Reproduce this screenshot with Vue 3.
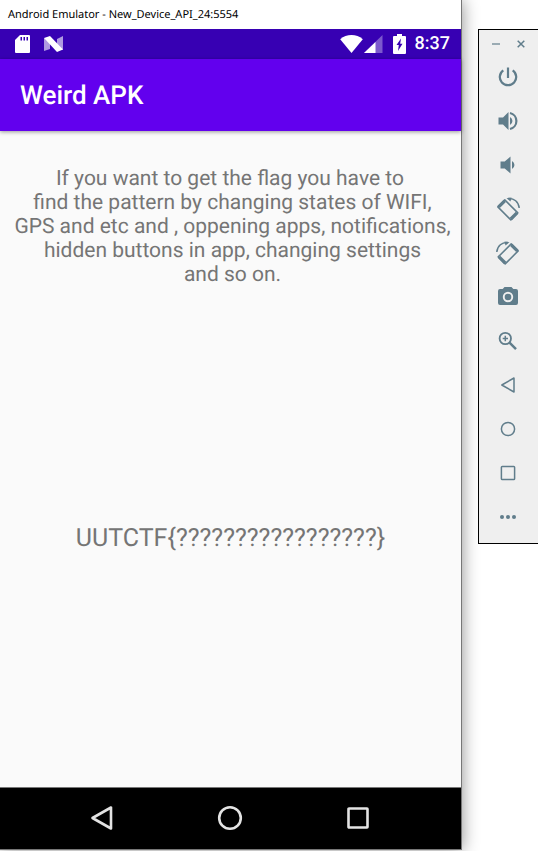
<script setup>
const message = [
  'If you want to get the flag you have to ',
  'find the pattern by changing states of WIFI,',
  'GPS and etc and , oppening apps, notifications,',
  'hidden buttons in app, changing settings',
  'and so on.',
]

const tools = [
  { id: 'power', label: 'Power' },
  { id: 'volume-up', label: 'Volume up' },
  { id: 'volume-down', label: 'Volume down' },
  { id: 'rotate-left', label: 'Rotate left' },
  { id: 'rotate-right', label: 'Rotate right' },
  { id: 'camera', label: 'Take screenshot' },
  { id: 'zoom', label: 'Zoom' },
  { id: 'back', label: 'Back' },
  { id: 'home', label: 'Home' },
  { id: 'overview', label: 'Overview' },
  { id: 'more', label: 'More' },
]
</script>

<template>
  <div class="desktop">
    <section class="window">
      <header class="titlebar">Android Emulator - New_Device_API_24:5554</header>

      <div class="status">
        <svg class="sd" width="16" height="18" viewBox="0 0 16 18">
          <path fill="#fff" d="M5 0H14Q15 0 15 1V17Q15 18 14 18H1Q0 18 0 17V5Z" />
          <path fill="#3700b3" d="M5.500 2h1.500v3.500h-1.500zM8.500 2h1.500v3.500h-1.500zM11.500 2h1.500v3.500h-1.500z" />
        </svg>
        <svg class="nougat" width="19" height="16" viewBox="0 0 19 16">
          <path fill="#fff" fill-opacity=".6" d="M0 2 6 5V13L0 15ZM13 3 19 0V14L13 11Z" />
          <path fill="#fff" d="M0 2 6 0 19 13.500 13 16Z" />
        </svg>
        <span class="spacer"></span>
        <svg width="24" height="18" viewBox="0 0 24 18">
          <path fill="#fff" d="M11.500 18 .2 4.200C3.500 1.400 7.300 0 11.500 0s8 1.400 11.300 4.200Z" />
        </svg>
        <svg width="19" height="18" viewBox="0 0 19 18">
          <path fill="#fff" fill-opacity=".35" d="M0 18 18.500 0V18Z" />
          <path fill="#fff" d="M0 18 11.500 7V18Z" />
        </svg>
        <svg class="battery" width="13" height="20" viewBox="0 0 13 20">
          <path fill="#fff" d="M4 0H9V2H12Q13 2 13 3V19Q13 20 12 20H1Q0 20 0 19V3Q0 2 1 2H4Z" />
          <path fill="#3700b3" d="M8 4.500 3.500 11H5.800L5 17 9.500 9.700H7.200Z" />
        </svg>
        <time class="clock">8:37</time>
      </div>

      <div class="appbar"><h1>Weird APK</h1></div>

      <main class="content">
        <p class="message">
          <span v-for="line in message" :key="line">{{ line }}</span>
        </p>
        <p class="flag">UUTCTF{?????????????????}</p>
      </main>

      <nav class="navbar">
        <button type="button" aria-label="Back">
          <svg width="26" height="26" viewBox="0 0 26 26"><path d="M22 2.500V23.500L3.500 13Z" /></svg>
        </button>
        <button type="button" aria-label="Home">
          <svg width="26" height="26" viewBox="0 0 26 26"><circle cx="13" cy="13" r="10.800" /></svg>
        </button>
        <button type="button" aria-label="Overview">
          <svg width="26" height="26" viewBox="0 0 26 26"><rect x="3.500" y="3.500" width="19" height="19" rx=".5" /></svg>
        </button>
      </nav>
    </section>

    <aside class="panel">
      <div class="panel-head">
        <button type="button" aria-label="Minimize">
          <svg width="10" height="10" viewBox="0 0 10 10"><path d="M1 5H9" stroke="#607d8b" stroke-opacity=".6" stroke-width="2" /></svg>
        </button>
        <button type="button" aria-label="Close">
          <svg width="10" height="10" viewBox="0 0 10 10"><path d="M1.700 1.700 8.300 8.300M8.300 1.700 1.700 8.300" stroke="#607d8b" stroke-width="1.500" /></svg>
        </button>
      </div>
      <button v-for="tool in tools" :key="tool.id" class="tool" type="button" :aria-label="tool.label">
        <svg width="24" height="24" viewBox="0 0 24 24">
          <g v-if="tool.id === 'power'" class="line bold">
            <path d="M12 2.500V13" />
            <path d="M7.300 5.300A8.200 8.200 0 1 0 16.700 5.300" />
          </g>
          <g v-else-if="tool.id === 'volume-up'">
            <path class="fill" d="M2.500 8.500H7L12.500 3V21L7 15.500H2.500Z" />
            <path class="fill" d="M14 8A4.500 4.500 0 0 1 14 16Z" />
            <path class="line bold" d="M14 4A8.200 8.200 0 0 1 14 20" />
          </g>
          <g v-else-if="tool.id === 'volume-down'" class="fill">
            <path d="M4.500 8.500H8.700L14.500 3.500V20.500L8.700 15.500H4.500Z" />
            <path d="M16 8A4.500 4.500 0 0 1 16 16Z" />
          </g>
          <g v-else-if="tool.id === 'rotate-left' || tool.id === 'rotate-right'" :class="{ mirrored: tool.id === 'rotate-right' }">
            <path class="line" d="M8.800 2.900 21.800 15.900 14.800 22.900 1.800 9.900Z" />
            <path class="line band" d="M8.800 3.800 2.700 9.900M20.900 15.900 14.800 22" />
            <path class="line" d="M12 1.500C18 .8 22.700 5 23.200 11" />
            <path class="fill" d="M10.500 1.200 15.500.4 14.500 4.400Z" />
          </g>
          <path v-else-if="tool.id === 'camera'" class="fill" fill-rule="evenodd" d="M8.500 2H15.500L17.300 4H20Q22 4 22 6V18Q22 20 20 20H4Q2 20 2 18V6Q2 4 4 4H6.700ZM12 6.800A5.200 5.200 0 1 0 12 17.200 5.200 5.200 0 0 0 12 6.800ZM12 8.700A3.300 3.300 0 1 1 12 15.300 3.300 3.300 0 0 1 12 8.700Z" />
          <g v-else-if="tool.id === 'zoom'" class="line">
            <circle cx="9.300" cy="9.500" r="5.700" stroke-width="1.800" />
            <path d="M6.700 9.500H12M9.300 6.800V12.200" />
            <path d="M13.500 13.700 20 20.200" stroke-width="2.400" />
          </g>
          <path v-else-if="tool.id === 'back'" class="line" d="M18 5V19L5.800 12Z" />
          <circle v-else-if="tool.id === 'home'" class="line" cx="12" cy="12" r="6.600" />
          <rect v-else-if="tool.id === 'overview'" class="line" x="5.400" y="5.400" width="13.200" height="13.200" rx=".8" />
          <g v-else class="fill">
            <circle cx="6" cy="12" r="2" />
            <circle cx="12" cy="12" r="2" />
            <circle cx="18" cy="12" r="2" />
          </g>
        </svg>
      </button>
    </aside>
  </div>
</template>

<style>
body {
  margin: 0;
  background: #fff;
}
</style>

<style scoped>
.desktop {
  display: flex;
  align-items: flex-start;
  gap: 16px;
  min-height: 100vh;
  box-sizing: border-box;
  padding-bottom: 1px;
  overflow: hidden;
  background: #fff;
  text-rendering: geometricPrecision;
}
.window {
  flex: 1;
  min-width: 0;
  align-self: stretch;
  display: flex;
  flex-direction: column;
  border-right: 1px solid #777;
  border-bottom: 1px solid #777;
  box-shadow: 0 0 16px rgba(0, 0, 0, 0.45);
}
.titlebar {
  padding-left: 8px;
  background: #fff;
  color: #000;
  font: 11px/29px "Noto Sans", "Open Sans", sans-serif;
  white-space: nowrap;
}
.status {
  display: flex;
  align-items: center;
  height: 30px;
  padding: 0 11px 0 15px;
  background: #3700b3;
}
.nougat {
  margin-left: 13px;
}
.spacer {
  flex: 1;
}
.battery {
  margin-left: 10px;
}
.clock {
  margin-left: 9px;
  color: #fff;
  font: 500 18px/30px Roboto, sans-serif;
}
.appbar {
  position: relative;
  padding: 2px 20px 0;
  background: #6200ee;
  box-shadow: 0 1px 4px rgba(0, 0, 0, 0.4);
}
h1 {
  margin: 0;
  color: #fff;
  font: 500 26px/70px Roboto, sans-serif;
}
.content {
  flex: 1;
  display: flex;
  flex-direction: column;
  background: #fafafa;
  color: #757575;
  font-family: Roboto, sans-serif;
  text-align: center;
}
.message {
  margin: 0;
  padding: 36px 0 0 4px;
  font-size: 21px;
  line-height: 24px;
}
.message span {
  display: block;
  white-space: pre;
}
.flag {
  margin: 236px 0 0;
  font-size: 25px;
  line-height: 32px;
}
.navbar {
  display: flex;
  justify-content: center;
  padding: 0 2px 2px 0;
  background: #000;
  border-top: 1px solid #777;
}
button {
  display: flex;
  align-items: center;
  justify-content: center;
  padding: 0;
  border: 0;
  background: none;
}
.navbar button {
  width: 128px;
  height: 59px;
}
.navbar svg {
  fill: none;
  stroke: #e3e3e3;
  stroke-width: 2.6;
  stroke-linejoin: round;
}
.panel {
  position: relative;
  width: 58px;
  margin-top: 29px;
  padding: 0 1px 4px 0;
  background: #efefef;
  border: 1px solid #000;
  border-right: 0;
}
.panel-head {
  display: flex;
  justify-content: center;
  gap: 1px;
  padding-bottom: 2px;
}
.panel-head button {
  width: 24px;
  height: 28px;
}
.panel .tool {
  width: 100%;
  height: 44px;
}
.panel .tool:nth-child(2) {
  margin-top: -5px;
}
.fill {
  fill: #607d8b;
}
.line {
  fill: none;
  stroke: #607d8b;
  stroke-width: 1.5;
  stroke-linejoin: round;
}
.line.bold {
  stroke-width: 2.2;
}
.line.band {
  stroke-width: 3.2;
}
.mirrored {
  transform: translateX(24px) scaleX(-1);
}
</style>
